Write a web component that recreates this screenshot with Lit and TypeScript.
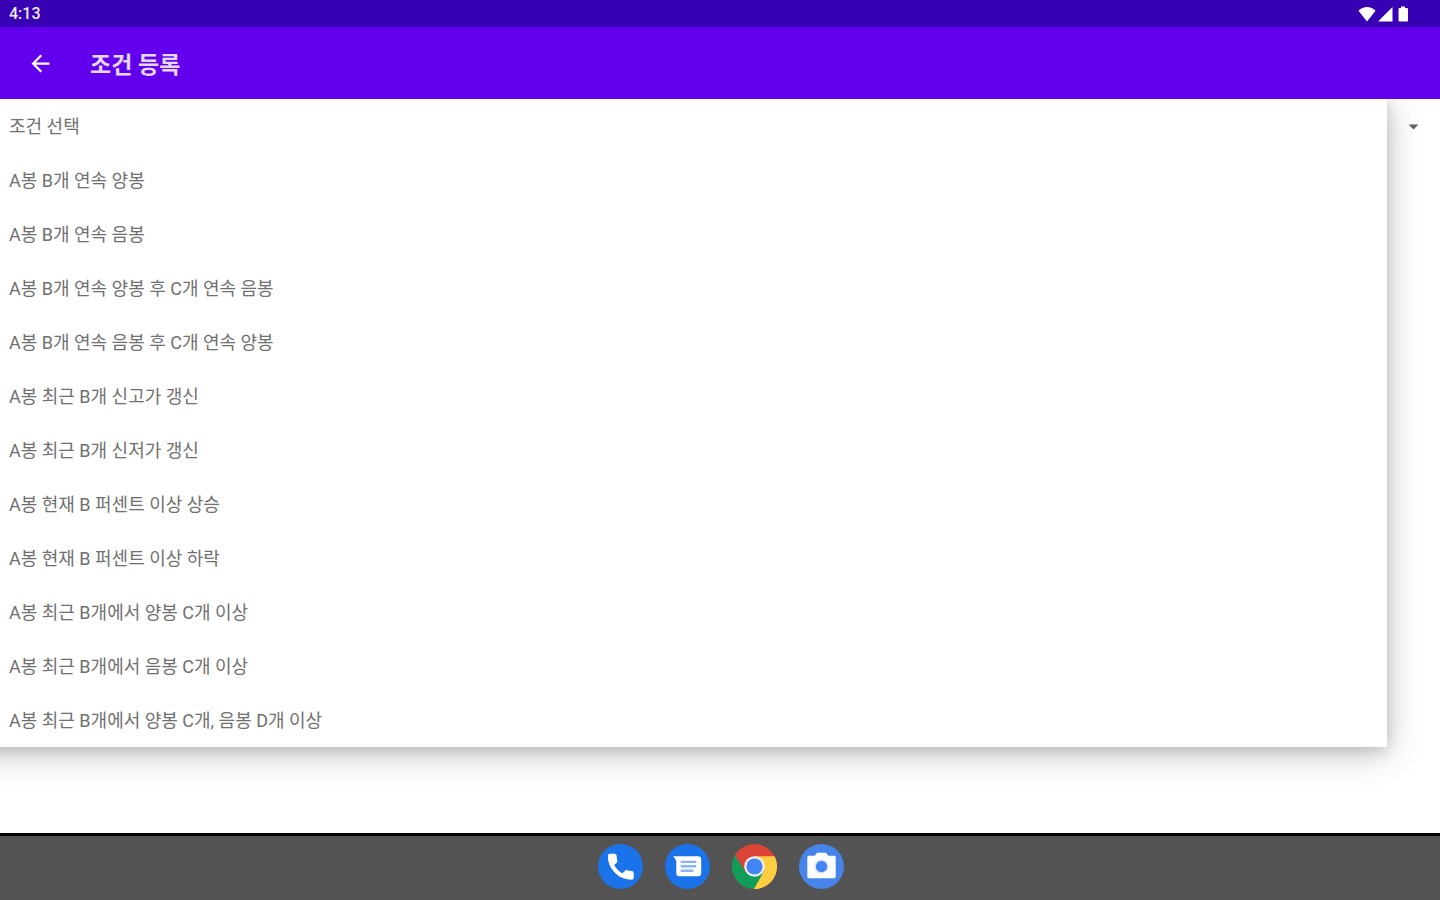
import { LitElement, html, css } from "lit";
import { customElement, state } from "lit/decorators.js";

const CONDITIONS = [
  "조건 선택",
  "A봉 B개 연속 양봉",
  "A봉 B개 연속 음봉",
  "A봉 B개 연속 양봉 후 C개 연속 음봉",
  "A봉 B개 연속 음봉 후 C개 연속 양봉",
  "A봉 최근 B개 신고가 갱신",
  "A봉 최근 B개 신저가 갱신",
  "A봉 현재 B 퍼센트 이상 상승",
  "A봉 현재 B 퍼센트 이상 하락",
  "A봉 최근 B개에서 양봉 C개 이상",
  "A봉 최근 B개에서 음봉 C개 이상",
  "A봉 최근 B개에서 양봉 C개, 음봉 D개 이상",
];

@customElement("status-bar")
class StatusBar extends LitElement {
  static styles = css`
    :host {
      display: flex;
      align-items: center;
      justify-content: space-between;
      box-sizing: border-box;
      height: 27px;
      padding: 1px 28px 0 9px;
      background: #3700b3;
      color: #f1ebff;
      font-size: 16px;
      font-weight: 500;
      line-height: 26px;
    }
    .icons {
      display: flex;
      align-items: center;
      gap: 2px;
    }
    svg {
      display: block;
      fill: #fff;
    }
  `;

  render() {
    return html`
      <time>4:13</time>
      <div class="icons">
        <svg width="18" height="16" viewBox="0 0 18 16" aria-hidden="true"><path d="M9 15.500 0.500 4.700C3 2.200 6 1 9 1s6 1.200 8.500 3.700z" /></svg>
        <svg width="16" height="16" viewBox="0 0 16 16" aria-hidden="true"><path d="M0.500 15.500V15L14.500 1v14.500z" /></svg>
        <svg width="16" height="16" viewBox="0 0 16 16" aria-hidden="true"><path d="M5 2V0.500h4V2h2q1 0 1 1v11.500q0 1-1 1H3.500q-1 0-1-1V3q0-1 1-1z" /></svg>
      </div>
    `;
  }
}

@customElement("app-bar")
class AppBar extends LitElement {
  static styles = css`
    :host {
      display: flex;
      align-items: center;
      gap: 36px;
      height: 72px;
      padding-left: 27px;
      background: #6200ee;
      color: #e4d8ff;
    }
    .back {
      display: block;
      padding: 0;
      border: 0;
      background: none;
      cursor: pointer;
    }
    svg {
      display: block;
      fill: #fff;
    }
    h1 {
      margin: 0;
      padding-top: 5px;
      font-size: 23px;
      font-weight: 700;
      line-height: 32px;
    }
  `;

  render() {
    return html`
      <button class="back" aria-label="뒤로">
        <svg width="27" height="27" viewBox="0 0 24 24" aria-hidden="true"><path d="M20 11H7.830l5.590-5.590L12 4l-8 8 8 8 1.410-1.410L7.830 13H20v-2z" /></svg>
      </button>
      <h1>조건 등록</h1>
    `;
  }
}

@customElement("condition-picker")
class ConditionPicker extends LitElement {
  @state() private open = true;
  @state() private selected = 0;

  static styles = css`
    :host {
      display: block;
      position: relative;
    }
    button {
      display: flex;
      align-items: center;
      width: 100%;
      height: 54px;
      padding: 0 9px 2px;
      border: 0;
      background: none;
      color: #707070;
      font: inherit;
      font-size: 18px;
      text-align: left;
      cursor: pointer;
    }
    .field {
      justify-content: space-between;
      padding: 1px 21px 0 9px;
    }
    .field svg {
      display: block;
      fill: #616161;
    }
    /* The sheet runs past the left edge so its shadow stays even there. */
    .menu {
      position: absolute;
      top: 0;
      left: -40px;
      right: 53px;
      margin: 0;
      padding: 0 0 0 40px;
      list-style: none;
      background: #fff;
      box-shadow: 0 6px 32px rgba(0, 0, 0, 0.26), 0 3px 12px rgba(0, 0, 0, 0.12);
    }
    .option:hover {
      background: #f0f0f0;
    }
  `;

  private choose(index: number) {
    this.selected = index;
    this.open = false;
  }

  render() {
    return html`
      <button class="field" aria-label="조건 선택" aria-expanded=${this.open} @click=${() => (this.open = !this.open)}>
        <span>${this.open ? "" : CONDITIONS[this.selected]}</span>
        <svg width="11" height="6" viewBox="0 0 11 6" aria-hidden="true"><path d="M0.500 0.500h10L5.500 5.500z" /></svg>
      </button>
      ${this.open
        ? html`<ul class="menu">
            ${CONDITIONS.map(
              (label, i) => html`<li><button class="option" @click=${() => this.choose(i)}>${label}</button></li>`
            )}
          </ul>`
        : null}
    `;
  }
}

@customElement("app-dock")
class AppDock extends LitElement {
  static styles = css`
    :host {
      display: flex;
      align-items: center;
      justify-content: center;
      gap: 22px;
      height: 64px;
      padding: 0 0 3px 1px;
      box-sizing: border-box;
      background: #535354;
      box-shadow: 0 -3px #000;
    }
    button {
      display: block;
      padding: 0;
      border: 0;
      background: none;
      border-radius: 50%;
      cursor: pointer;
    }
    svg {
      display: block;
    }
  `;

  render() {
    return html`
      <button aria-label="전화">
        <svg width="45" height="45" viewBox="0 0 46 46" aria-hidden="true">
          <circle cx="23" cy="23" r="23" fill="#1a73e8" />
          <path fill="#fff" stroke="#fff" stroke-width="0.900" stroke-linejoin="round" transform="translate(6.500 6.500) scale(1.400)" d="M6.620 10.790c1.440 2.830 3.760 5.140 6.590 6.590l2.200-2.200c.27-.27.67-.36 1.020-.24 1.120.37 2.330.57 3.570.57.55 0 1 .45 1 1V20c0 .55-.45 1-1 1-9.390 0-17-7.610-17-17 0-.55.45-1 1-1h3.500c.55 0 1 .45 1 1 0 1.250.2 2.450.57 3.570.11.35.03.74-.25 1.020l-2.200 2.200z" />
        </svg>
      </button>
      <button aria-label="메시지">
        <svg width="45" height="45" viewBox="0 0 46 46" aria-hidden="true">
          <circle cx="23" cy="23" r="23" fill="#1a73e8" />
          <path fill="#fff" d="M8.500 12.500H34q3 0 3 3v14.500q0 3-3 3H14.500q-3 0-3-3V17z" />
          <path fill="#8ab4f8" d="M16 17h16v2.500H16zM16 21.500h16V24H16zM16 26h13v2.500H16z" />
        </svg>
      </button>
      <button aria-label="크롬">
        <svg width="45" height="45" viewBox="0 0 46 46" aria-hidden="true">
          <circle cx="23" cy="23" r="23" fill="#db4437" />
          <path fill="#0f9d58" d="M3.080 11.500A23 23 0 0 0 23 46l9.300-17.500L13.700 28.500z" />
          <path fill="#ffcd40" d="M23 12.500h20.500A23 23 0 0 1 22.500 46L32.500 28z" />
          <circle cx="23" cy="23" r="10.500" fill="#f1f1f1" />
          <circle cx="23" cy="23" r="8.300" fill="#4285f4" />
        </svg>
      </button>
      <button aria-label="카메라">
        <svg width="45" height="45" viewBox="0 0 46 46" aria-hidden="true">
          <circle cx="23" cy="23" r="23" fill="#4784ea" />
          <path fill="#fff" d="M10 12h6l2.500-3h9l2.500 3h6q1.500 0 1.500 1.500V33.500q0 1.500-1.500 1.500H10q-1.500 0-1.500-1.500V13.500Q8.500 12 10 12z" />
          <circle cx="23" cy="23" r="7.500" fill="#e3e9f4" />
          <circle cx="23" cy="23" r="5.800" fill="#4285f4" />
        </svg>
      </button>
    `;
  }
}

@customElement("app-root")
class AppRoot extends LitElement {
  static styles = css`
    :host {
      display: flex;
      flex-direction: column;
      min-height: 100vh;
      background: #fff;
      font-family: Roboto, "Noto Sans CJK KR", sans-serif;
    }
    main {
      flex: 1;
      overflow: hidden;
    }
  `;

  render() {
    return html`
      <status-bar></status-bar>
      <app-bar></app-bar>
      <main><condition-picker></condition-picker></main>
      <app-dock></app-dock>
    `;
  }
}
